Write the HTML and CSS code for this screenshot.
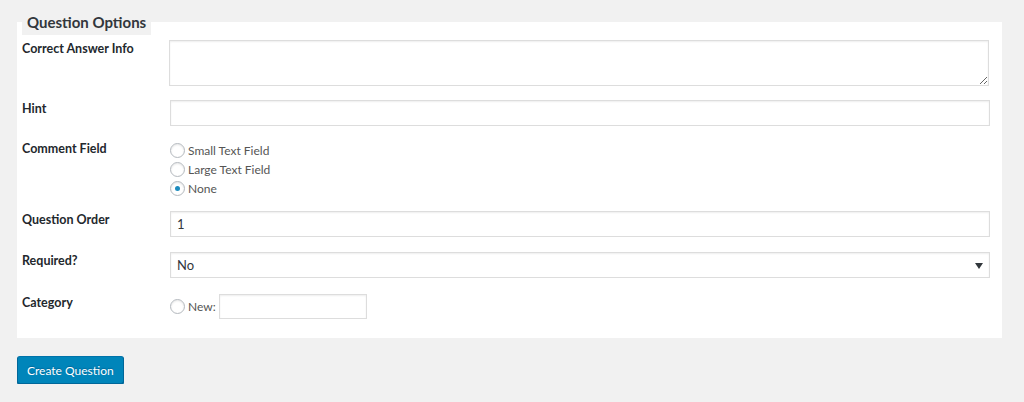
FILE: index.html
```html
<!DOCTYPE html>
<html lang="en">
<head>
  <meta charset="UTF-8">
  <title>Question Options</title>
  <link rel="stylesheet" href="styles.css">
</head>
<body>
  <form class="question-form">
    <fieldset class="options-box">
      <legend>Question Options</legend>

      <div class="form-grid">
        <label class="field-label" for="answerInfo">Correct Answer Info</label>
        <div class="field">
          <textarea id="answerInfo" class="text-area"></textarea>
        </div>

        <label class="field-label" for="hint">Hint</label>
        <div class="field">
          <input type="text" id="hint" class="text-input">
        </div>

        <span class="field-label">Comment Field</span>
        <div class="field radio-list">
          <label class="radio-line"><input type="radio" name="comments"> Small Text Field</label>
          <label class="radio-line"><input type="radio" name="comments"> Large Text Field</label>
          <label class="radio-line"><input type="radio" name="comments" checked> None</label>
        </div>

        <label class="field-label" for="order">Question Order</label>
        <div class="field">
          <input type="text" id="order" class="text-input" value="1">
        </div>

        <label class="field-label required-label" for="required">Required?</label>
        <div class="field select-wrap">
          <select id="required" class="select-input">
            <option>No</option>
            <option>Yes</option>
          </select>
        </div>

        <span class="field-label category-label">Category</span>
        <div class="field category-line">
          <label class="radio-line"><input type="radio" name="category"> New:</label>
          <input type="text" class="text-input small">
        </div>
      </div>
    </fieldset>

    <button type="submit" class="button-primary">Create Question</button>
  </form>
</body>
</html>
```

FILE: styles.css
```css
/* Page */
body {
  margin: 0;
  background: #f1f1f1;
  color: #444;
  font-family: Lato, "Open Sans", sans-serif;
  font-size: 12px;
}

.question-form {
  padding: 9px 22px 0 17px;
}

/* Options box */
.options-box {
  margin: 0;
  border: none;
  background: #fff;
  padding: 5px 13px 19px 5px;
  min-width: 0;
}

.options-box legend {
  background: #f1f1f1;
  padding: 0 5px;
  margin: 0;
  font-size: 15px;
  font-weight: bold;
  line-height: 26px;
  color: #32373c;
}

.form-grid {
  display: grid;
  grid-template-columns: 147px 1fr;
  row-gap: 14px;
}

.field-label {
  font-weight: bold;
  font-size: 12.5px;
  color: #23282d;
  line-height: 16px;
  padding-top: 1px;
}

/* Inputs */
.text-input,
.text-area,
.select-input {
  display: block;
  box-sizing: border-box;
  width: 100%;
  border: 1px solid #ddd;
  box-shadow: inset 0 1px 2px rgba(0, 0, 0, 0.07);
  background: #fff;
  color: #32373c;
  font-family: inherit;
  font-size: 13px;
  margin: 0;
  border-radius: 0;
}

.text-area {
  height: 46px;
  resize: vertical;
}

.text-input {
  height: 26px;
  padding: 0 6px;
  margin-left: 1px;
}

.text-input.small {
  width: 148px;
  height: 25px;
  margin-left: 3px;
}

.select-wrap {
  position: relative;
}

.select-input {
  appearance: none;
  -webkit-appearance: none;
  height: 26px;
  padding: 0 6px;
  margin-left: 1px;
}

.select-wrap::after {
  content: "";
  position: absolute;
  right: 6px;
  top: 11px;
  border-left: 4px solid transparent;
  border-right: 4px solid transparent;
  border-top: 6px solid #32373c;
}

/* Radios */
.radio-list {
  display: flex;
  flex-direction: column;
  padding-top: 1px;
  margin-bottom: -1px;
}

.radio-line {
  display: flex;
  align-items: center;
  gap: 3px;
  height: 19px;
  color: #555;
}

.radio-line input {
  appearance: none;
  -webkit-appearance: none;
  width: 15px;
  height: 15px;
  margin: 0 0 0 1px;
  border: 1px solid #b4b9be;
  border-radius: 50%;
  background: #fff;
  box-shadow: inset 0 1px 2px rgba(0, 0, 0, 0.1);
  display: grid;
  place-content: center;
}

.radio-line input:checked::before {
  content: "";
  width: 5px;
  height: 5px;
  border-radius: 50%;
  background: #1e8cbe;
}

.required-label,
.select-wrap {
  margin-top: 1px;
}

.category-label,
.category-line {
  margin-top: 2px;
}

.category-line {
  display: flex;
  align-items: center;
}

/* Button */
.button-primary {
  margin-top: 18px;
  height: 28px;
  padding: 0 9px;
  background: #0085ba;
  border: 1px solid #0073aa;
  border-color: #0073aa #006799 #006799;
  border-radius: 3px;
  box-shadow: 0 1px 0 #006799;
  color: #fff;
  font-family: inherit;
  font-size: 12px;
  text-shadow: 0 -1px 1px #006799;
}
```
